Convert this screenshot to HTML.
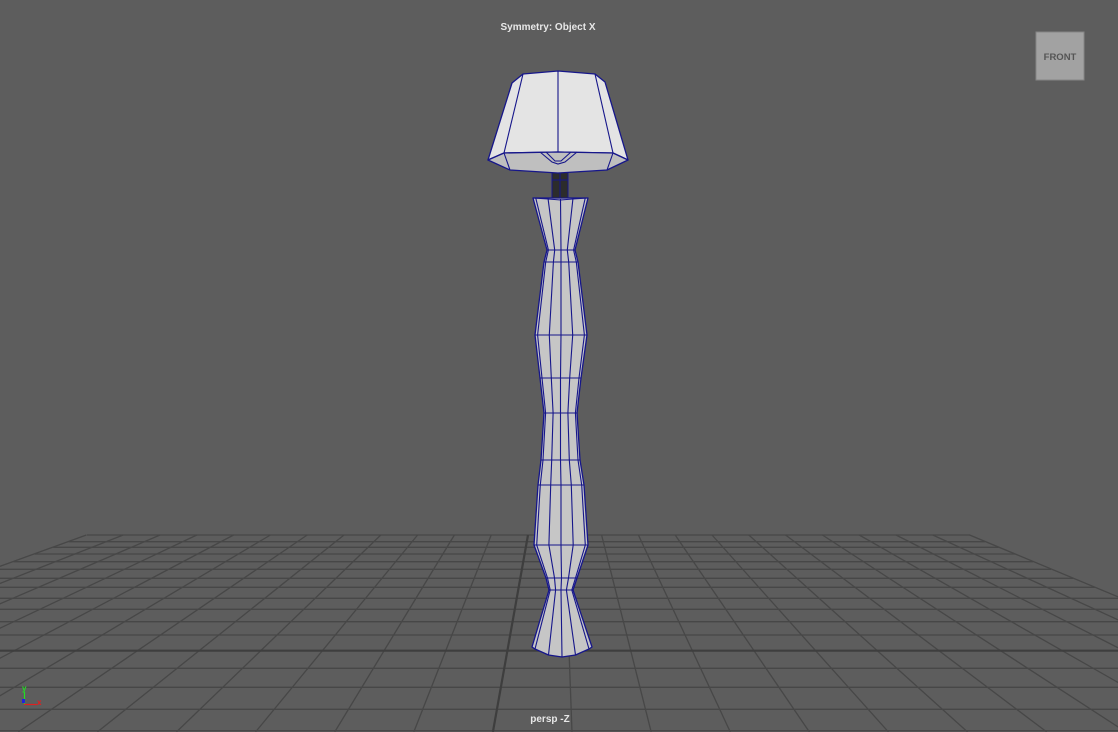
<!DOCTYPE html>
<html><head><meta charset="utf-8"><style>
html,body{margin:0;padding:0;background:#5d5d5d;width:1118px;height:732px;overflow:hidden}
svg{display:block}
</style></head><body>
<svg width="1118" height="732" viewBox="0 0 1118 732" xmlns="http://www.w3.org/2000/svg" font-family="Liberation Sans, sans-serif">
<rect width="1118" height="732" fill="#5d5d5d"/>
<g stroke="#474747" stroke-width="1.3" fill="none">
<line x1="87" y1="535" x2="970" y2="535"/>
<line x1="68.6" y1="541.7" x2="985" y2="541.7"/>
<line x1="53.2" y1="547.3" x2="998.5" y2="547.3"/>
<line x1="34.7" y1="554" x2="1014.6" y2="554"/>
<line x1="13.5" y1="561.7" x2="1033" y2="561.7"/>
<line x1="0" y1="569.3" x2="1051" y2="569.3"/>
<line x1="0" y1="578.3" x2="1073" y2="578.3"/>
<line x1="0" y1="587.3" x2="1095" y2="587.3"/>
<line x1="0" y1="598.3" x2="1118" y2="598.3"/>
<line x1="0" y1="609.3" x2="1118" y2="609.3"/>
<line x1="0" y1="621.7" x2="1118" y2="621.7"/>
<line x1="0" y1="635" x2="1118" y2="635"/>
<line x1="0" y1="668.3" x2="1118" y2="668.3"/>
<line x1="0" y1="687.3" x2="1118" y2="687.3"/>
<line x1="0" y1="709.3" x2="1118" y2="709.3"/>
<line x1="0" y1="730.7" x2="1118" y2="730.7"/>
<line x1="86.4" y1="535" x2="-456.5" y2="732"/>
<line x1="123.2" y1="535" x2="-377.4" y2="732"/>
<line x1="160" y1="535" x2="-298.3" y2="732"/>
<line x1="196.8" y1="535" x2="-219.2" y2="732"/>
<line x1="233.6" y1="535" x2="-140" y2="732"/>
<line x1="270.4" y1="535" x2="-60.9" y2="732"/>
<line x1="307.2" y1="535" x2="18.2" y2="732"/>
<line x1="344" y1="535" x2="97.3" y2="732"/>
<line x1="380.8" y1="535" x2="176.4" y2="732"/>
<line x1="417.6" y1="535" x2="255.5" y2="732"/>
<line x1="454.4" y1="535" x2="334.7" y2="732"/>
<line x1="491.2" y1="535" x2="413.8" y2="732"/>
<line x1="564.8" y1="535" x2="572" y2="732"/>
<line x1="601.6" y1="535" x2="651.2" y2="732"/>
<line x1="638.4" y1="535" x2="730.3" y2="732"/>
<line x1="675.2" y1="535" x2="809.4" y2="732"/>
<line x1="712" y1="535" x2="888.5" y2="732"/>
<line x1="748.8" y1="535" x2="967.6" y2="732"/>
<line x1="785.6" y1="535" x2="1046.8" y2="732"/>
<line x1="822.4" y1="535" x2="1125.9" y2="732"/>
<line x1="859.2" y1="535" x2="1205" y2="732"/>
<line x1="896" y1="535" x2="1284" y2="732"/>
<line x1="932.8" y1="535" x2="1363" y2="732"/>
<line x1="969.6" y1="535" x2="1442.4" y2="732"/>
</g>
<g stroke="#3e3e3e" stroke-width="2.2">
<line x1="0" y1="650.7" x2="1118" y2="650.7"/>
<line x1="528" y1="535" x2="492.9" y2="732"/>
</g>

<!-- lamp body -->
<polygon fill="#c6c6c6" stroke="#16168a" stroke-width="1.3" stroke-linejoin="round"
 points="533,198 547,250 544,262 535,335 540,378 544,413 541,460 538,485 534,545 546,578 549,590 532,647 535,649 548.5,655 562,657 575.5,655 589,649 592,647 573,590 577,578 588,545 584,485 580,460 577,413 581,378 587,335 578,262 575,250 588,198"/>
<g stroke="#16168a" stroke-width="1.1" fill="none">
<polyline points="535.75,198 548.4,250 545.7,262 537.6,335 542,378 545.6,413 543,460 540.3,485 536.7,545 547.5,578 550.2,590 535,649"/>
<polyline points="548.1,199 554.7,250 553.4,262 549.3,335 551.3,378 553.1,413 551.7,460 550.7,485 548.9,545 554.5,578 555.6,590 548.5,655"/>
<polyline points="560.5,199 561,250 561,262 561,335 560.5,378 560.5,413 560.5,460 561,485 561,545 561.5,578 561,590 562,657"/>
<polyline points="572.9,199 567.3,250 568.7,262 572.7,335 569.7,378 567.9,413 569.3,460 571.3,485 573.2,545 568.5,578 566.4,590 575.5,655"/>
<polyline points="585.25,198 573.6,250 576.3,262 584.4,335 579,378 575.4,413 578,460 581.7,485 585.3,545 575.5,578 571.8,590 589,649"/>
<polyline points="533,198 548,199 560.5,200 573,199 588,198"/>
<line x1="547" y1="250" x2="575" y2="250"/>
<line x1="544" y1="262" x2="578" y2="262"/>
<line x1="535" y1="335" x2="587" y2="335"/>
<line x1="540" y1="378" x2="581" y2="378"/>
<line x1="544" y1="413" x2="577" y2="413"/>
<line x1="541" y1="460" x2="580" y2="460"/>
<line x1="538" y1="485" x2="584" y2="485"/>
<line x1="534" y1="545" x2="588" y2="545"/>
<line x1="546" y1="578" x2="577" y2="578"/>
<line x1="549" y1="590" x2="573" y2="590"/>
</g>

<!-- stem -->
<rect x="552" y="162" width="16" height="36" fill="#2c2c2c" stroke="#16168a" stroke-width="1"/>
<line x1="560" y1="162" x2="560" y2="198" stroke="#16168a" stroke-width="1"/>
<line x1="552" y1="180" x2="568" y2="180" stroke="#16168a" stroke-width="1"/>

<!-- shade -->
<polygon fill="#e4e4e4" stroke="#16168a" stroke-width="1.3" stroke-linejoin="round"
 points="512,83 523,74 558,71 595,74 605,82 628,160 613,153 558,152 504,153 488,160"/>
<polygon fill="#bfbfbf" stroke="#16168a" stroke-width="1.3" stroke-linejoin="round"
 points="488,160 504,153 558,152 613,153 628,160 607,170 558,173 510,170"/>
<g stroke="#16168a" stroke-width="1.1" fill="none">
<line x1="523" y1="74" x2="504" y2="153"/>
<line x1="595" y1="74" x2="613" y2="153"/>
<line x1="558" y1="71" x2="558" y2="152"/>
<line x1="504" y1="153" x2="510" y2="170"/>
<line x1="613" y1="153" x2="607" y2="170"/>
<polyline points="540,152 552,162 558,164 565,162 577,152"/>
<polyline points="546,152 555,161 561,161 571,152"/>
</g>

<!-- labels -->
<text x="548" y="30" fill="#e8e8e8" font-size="10" font-weight="bold" text-anchor="middle">Symmetry: Object X</text>
<text x="550" y="722" fill="#e8e8e8" font-size="10" font-weight="bold" text-anchor="middle">persp -Z</text>

<!-- view cube -->
<rect x="1036" y="32" width="48" height="48" fill="#a2a2a2" stroke="#858585" stroke-width="1"/>
<text x="1060" y="60" fill="#555" font-size="9.5" font-weight="bold" text-anchor="middle">FRONT</text>

<!-- axis -->
<line x1="24.5" y1="692" x2="24.5" y2="705" stroke="#22e022" stroke-width="1.2"/>
<line x1="24" y1="704.5" x2="37" y2="704.5" stroke="#e02020" stroke-width="1.2"/>
<text x="22" y="691" fill="#22e022" font-size="8" font-weight="bold">y</text>
<text x="37" y="705" fill="#e02020" font-size="8" font-weight="bold">x</text>
<rect x="22" y="699" width="3" height="4" fill="#2020e0"/>
</svg>
</body></html>
